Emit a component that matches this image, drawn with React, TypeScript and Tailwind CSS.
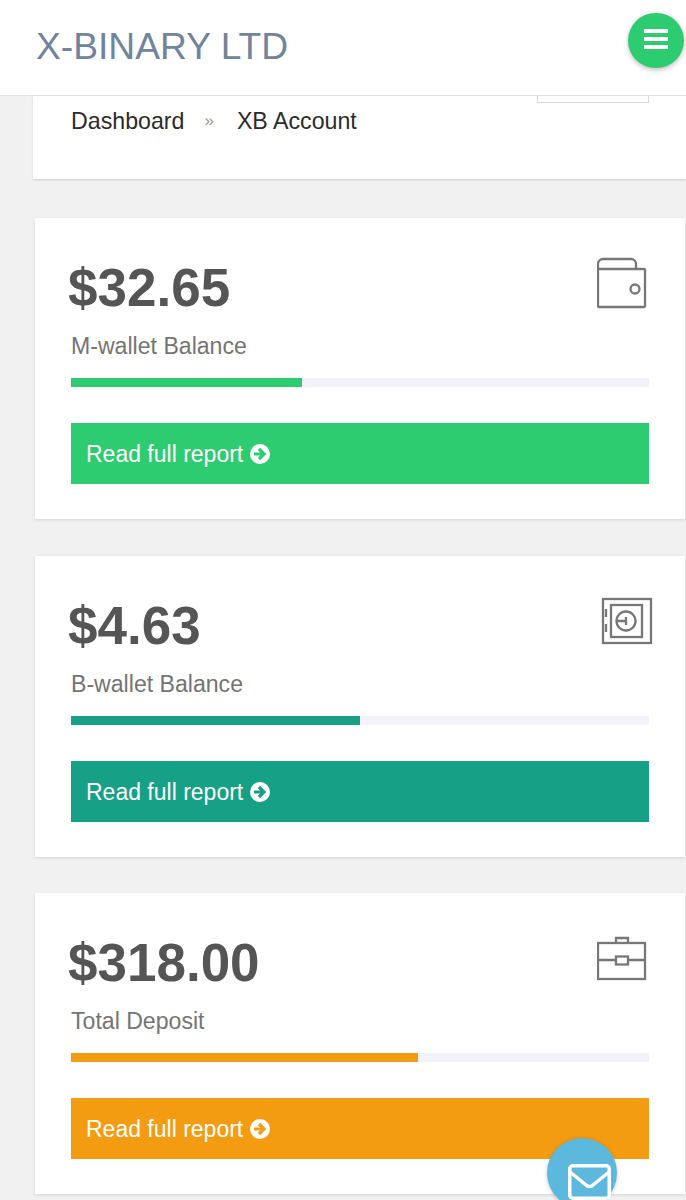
import { ReactNode } from 'react';

const WalletIcon = () => (
    <svg width="56" height="52" viewBox="0 0 56 52" fill="none" stroke="#777777" strokeWidth="2.3">
        <path d="M1 12V7a5 5 0 0 1 5-5h28a5 5 0 0 1 5 5v5" />
        <rect x="1" y="12" width="47" height="38" rx="1" />
        <circle cx="38" cy="32" r="4.5" />
    </svg>
);

const SafeIcon = () => (
    <svg width="56" height="52" viewBox="0 0 56 52" fill="none" stroke="#777777" strokeWidth="2.3">
        <rect x="6" y="4" width="48" height="44" />
        <rect x="14" y="10" width="31" height="32" />
        <circle cx="29" cy="26" r="9.5" />
        <path d="M19.5 26H29M29 22v8M9 14v8M9 29v8" />
    </svg>
);

const CaseIcon = () => (
    <svg width="56" height="52" viewBox="0 0 56 52" fill="none" stroke="#777777" strokeWidth="2.3">
        <rect x="1" y="11" width="47" height="36" />
        <path d="M19 11V6h12v5M1 28h18M31 28h17" />
        <rect x="19" y="24.5" width="12" height="8" />
    </svg>
);

const ArrowCircle = ({ arrowClass }: { arrowClass: string }) => (
    <svg width="20" height="20" viewBox="0 0 20 20" className="ml-[7px]">
        <circle cx="10" cy="10" r="10" fill="#fff" />
        <path d="M4 10h9M9 5l5 5-5 5" fill="none" strokeWidth="3.2" className={arrowClass} />
    </svg>
);

const StatCard = ({
    amount,
    label,
    barClass,
    barWidth,
    buttonClass,
    arrowClass,
    icon,
    className,
}: {
    amount: string;
    label: string;
    barClass: string;
    barWidth: string;
    buttonClass: string;
    arrowClass: string;
    icon: ReactNode;
    className: string;
}) => (
    <div className={`mr-px ml-[35px] h-[301px] bg-white px-9 pt-[36px] shadow-[0_1px_3px_rgba(0,0,0,0.12)] ${className}`}>
        <div className="flex h-[68px] items-start justify-between">
            <p className="ml-[-3px] text-[53px] leading-[67px] font-bold text-[#555555]">{amount}</p>
            <div className="mt-[3px] mr-[-4px]">{icon}</div>
        </div>
        <p className="mt-[9px] text-[23.1px] leading-[30px] text-[#747474]">{label}</p>
        <div className="mt-[17px] h-[9px] bg-[#f2f2f8]">
            <div className={`h-full ${barClass}`} style={{ width: barWidth }} />
        </div>
        <div className={`mt-[36px] flex h-[61px] items-center px-[15px] text-[23px] text-white ${buttonClass}`}>
            <span className="pt-[2px]">Read full report</span>
            <ArrowCircle arrowClass={arrowClass} />
        </div>
    </div>
);

export default function App() {
    return (
        <div
            className="relative h-[1200px] overflow-hidden bg-[#f1f1f1]"
            style={{ fontFamily: '"Liberation Sans", Arial, sans-serif' }}
        >
            <header className="flex h-[96px] items-center border-b border-[#e4e4e4] bg-white pb-[2px] pl-9">
                <h1 className="text-[37.2px] leading-none font-normal text-[#71849c]">X-BINARY LTD</h1>
            </header>

            <div className="relative ml-[33px] h-[83px] bg-white pt-[11px] pl-[38px] shadow-[0_1px_2px_rgba(0,0,0,0.14)]">
                <div className="absolute top-0 right-[37px] h-[7px] w-[112px] border-x border-b border-[#d6d6d6]" />
                <div className="flex items-center text-[23.2px] leading-[28px] text-[#2b2b2b]">
                    <span>Dashboard</span>
                    <span className="mr-[23px] ml-[20px] text-[17px] text-[#9a9a9a]">»</span>
                    <span>XB Account</span>
                </div>
            </div>

            <div className="mt-[39px] flex flex-col">
                <StatCard
                    amount="$32.65"
                    label="M-wallet Balance"
                    barClass="bg-[#2ecc71]"
                    barWidth="40%"
                    buttonClass="bg-[#2ecc71]"
                    arrowClass="stroke-[#2ecc71]"
                    icon={<WalletIcon />}
                    className="mt-0"
                />
                <StatCard
                    amount="$4.63"
                    label="B-wallet Balance"
                    barClass="bg-[#16a085]"
                    barWidth="50%"
                    buttonClass="bg-[#16a085]"
                    arrowClass="stroke-[#16a085]"
                    icon={<SafeIcon />}
                    className="mt-[37px]"
                />
                <StatCard
                    amount="$318.00"
                    label="Total Deposit"
                    barClass="bg-[#f39c12]"
                    barWidth="60%"
                    buttonClass="bg-[#f39c12]"
                    arrowClass="stroke-[#f39c12]"
                    icon={<CaseIcon />}
                    className="mt-[36px]"
                />
            </div>

            {/* floating buttons */}
            <div className="absolute top-[13px] left-[628px] flex h-[55px] w-[56px] flex-col items-center justify-center gap-[4px] rounded-full bg-[#2ecc71] pb-[4px] shadow-[0_2px_5px_rgba(0,0,0,0.25)]">
                <span className="h-[4px] w-[24px] bg-white" />
                <span className="h-[4px] w-[24px] bg-white" />
                <span className="h-[4px] w-[24px] bg-white" />
            </div>
            <div className="absolute top-[1138px] left-[547px] h-[70px] w-[70px] rounded-full bg-[#5db8dd] pt-[26px] pl-[21px] shadow-[0_1px_4px_rgba(0,0,0,0.2)]">
                <svg width="43" height="36" viewBox="0 0 43 36" fill="none" stroke="#fff" strokeWidth="3.5">
                    <rect x="1.75" y="1.75" width="39.5" height="32.5" rx="3" />
                    <path d="M2 8l16 13a5 5 0 0 0 7 0L41 8" />
                </svg>
            </div>
        </div>
    );
}
